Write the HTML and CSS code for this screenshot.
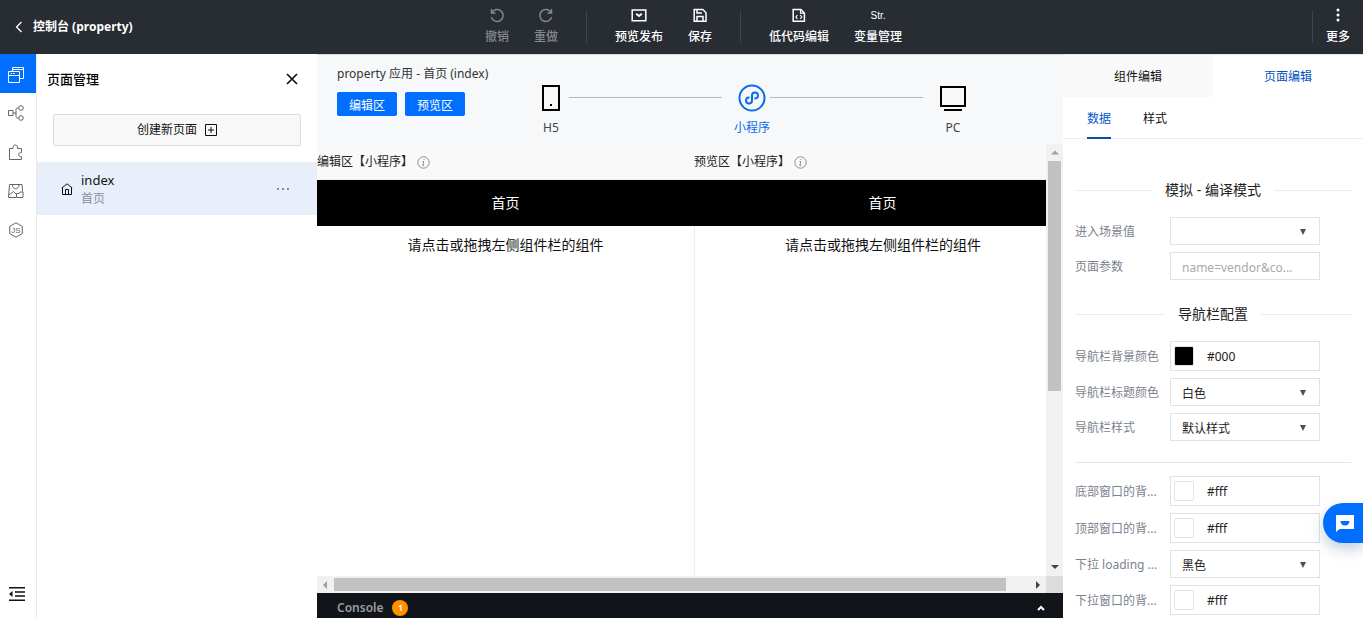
FILE: index.html
```html
<!DOCTYPE html>
<html lang="zh-CN">
<head>
<meta charset="utf-8">
<title>控制台 (property)</title>
<link rel="stylesheet" href="styles.css">
</head>
<body>
<div class="app">
  <header class="topbar">
    <a class="back" href="#">
      <svg width="8" height="12" viewBox="0 0 8 12" fill="none" stroke="currentColor" stroke-width="1.3"><path d="M6.5 1 1.5 6l5 5"/></svg>
      <span>控制台 (property)</span>
    </a>
    <nav class="tools">
      <button class="tool" disabled>
        <svg class="tool-icon" viewBox="0 0 16 16" fill="none" stroke="currentColor" stroke-width="1.5"><path d="M2.5 1v4h4M2.800 4.800a6 6 0 1 1-.4 4.400"/></svg>
        <span>撤销</span>
      </button>
      <button class="tool" disabled>
        <svg class="tool-icon" viewBox="0 0 16 16" fill="none" stroke="currentColor" stroke-width="1.5"><path d="M13.500 1v4h-4M13.200 4.800a6 6 0 1 0 .4 4.400"/></svg>
        <span>重做</span>
      </button>
      <span class="separator"></span>
      <button class="tool">
        <svg class="tool-icon" viewBox="0 0 16 16" fill="none" stroke="currentColor" stroke-width="1.500"><path d="M1.200 2h13.600v10.800H1.200z"/><path d="M5.200 5.800 8 8l2.800-2.200" stroke-width="2"/></svg>
        <span>预览发布</span>
      </button>
      <button class="tool">
        <svg class="tool-icon" viewBox="0 0 16 16" fill="none" stroke="currentColor" stroke-width="1.500"><path d="M2.200 1.500h8.600l3.200 3.200v8.600H2.200zM5 13V8.500h6V13M5 2v3h5"/></svg>
        <span>保存</span>
      </button>
      <span class="separator"></span>
      <button class="tool">
        <svg class="tool-icon" viewBox="0 0 16 16" fill="none" stroke="currentColor" stroke-width="1.500"><path d="M2.200 1.500h7.600l3.600 3.500v8.300H2.200z"/><path d="M6.500 7 4.900 9l1.600 2M9.200 7l1.600 2-1.600 2M9.500 2v3.200H13" stroke-width="1.200"/></svg>
        <span>低代码编辑</span>
      </button>
      <button class="tool">
        <span class="tool-glyph">Str.</span>
        <span>变量管理</span>
      </button>
    </nav>
    <span class="separator separator-end"></span>
    <button class="tool more">
      <svg class="tool-icon" viewBox="0 0 16 16" fill="currentColor"><circle cx="8" cy="2" r="1.500"/><circle cx="8" cy="7" r="1.500"/><circle cx="8" cy="12" r="1.500"/></svg>
      <span>更多</span>
    </button>
  </header>

  <div class="workspace">
    <nav class="rail">
      <button class="rail-item active" aria-label="页面管理">
        <svg width="16" height="16" viewBox="0 0 16 16" fill="none" stroke="currentColor"><path d="M.5 4.500h11v11H.5zM.5 8.500h11M2.500 6.500H4M5 6.500h1.500M4.500 4.500v-4h11v11h-4M4.500 2.500h11"/></svg>
      </button>
      <button class="rail-item" aria-label="流程">
        <svg width="16" height="16" viewBox="0 0 16 16" fill="none" stroke="currentColor"><path d="M.5 5.500h4.500v5H.5zM5 8h3M10.500 3H9.500Q8 3 8 4.500v7Q8 13 9.500 13h1"/><circle cx="13" cy="3" r="2.300"/><circle cx="13" cy="13" r="2.300"/></svg>
      </button>
      <button class="rail-item" aria-label="组件">
        <svg width="16" height="16" viewBox="0 0 16 16" fill="none" stroke="currentColor"><path d="M1.500 15.500V4.500H5C4.500-.2 10-.2 9.500 4.500h4v4.200c-4-.6-4 4.300 0 3.800v3z"/></svg>
      </button>
      <button class="rail-item" aria-label="素材">
        <svg width="16" height="16" viewBox="0 0 16 16" fill="none" stroke="currentColor"><path d="M8 14.500H.5l1-13h12.500l.6 7M4.500 2C5 7 10.500 7 11 2M1 12l4.500-3.500L8 11M8.500 14.500h6.500V9h-3l-1 1.500H8.500z"/></svg>
      </button>
      <button class="rail-item" aria-label="脚本">
        <svg width="16" height="16" viewBox="0 0 16 16" fill="none" stroke="currentColor"><path d="M8 .8 14.300 4.400v7.200L8 15.200 1.700 11.600V4.400z"/><text class="js-mark" x="8" y="11" text-anchor="middle">JS</text></svg>
      </button>
      <button class="rail-item collapse" aria-label="收起">
        <svg width="18" height="16" viewBox="0 0 18 16" fill="none" stroke="currentColor" stroke-width="1.500"><path d="M1 1.800h16M7 6h10M7 10h10M1 14.200h16"/><path d="M4.500 5v6L1 8z" fill="currentColor" stroke="none"/></svg>
      </button>
    </nav>

    <aside class="pages">
      <div class="pages-head">
        <h2 class="pages-title">页面管理</h2>
        <button class="close" aria-label="关闭">
          <svg width="12" height="12" viewBox="0 0 12 12" stroke="currentColor" stroke-width="1.700"><path d="m1 1 10 10M11 1 1 11"/></svg>
        </button>
      </div>
      <button class="create">
        <span>创建新页面</span>
        <svg width="12" height="12" viewBox="0 0 12 12" fill="none" stroke="currentColor"><path d="M.5.5h11v11H.5zM6 3v6M3 6h6"/></svg>
      </button>
      <div class="page-row">
        <svg width="12" height="12" viewBox="0 0 12 12" fill="none" stroke="currentColor"><path d="M.8 5 6 .8 11.200 5M1.500 4.500v7h9v-7M4.500 11.500V6.500h3v5"/></svg>
        <a class="page-link" href="#"><span class="page-name">index</span><span class="page-sub">首页</span></a>
        <button class="dots" aria-label="更多操作"><svg width="12" height="2" viewBox="0 0 12 2" fill="currentColor"><circle cx="1" cy="1" r=".8"/><circle cx="6" cy="1" r=".8"/><circle cx="11" cy="1" r=".8"/></svg></button>
      </div>
    </aside>

    <main class="stage">
      <div class="stage-head">
        <div class="stage-info">
          <div class="crumb">property 应用 - 首页 (index)</div>
          <div class="modes"><button class="mode">编辑区</button><button class="mode">预览区</button></div>
        </div>
        <div class="steps">
          <button class="step">
            <svg width="30" height="30" viewBox="0 0 30 30" fill="none" stroke="#000" stroke-width="2"><path d="M7 3h16v24H7z"/><path d="M14 22h2"/></svg>
            <span>H5</span>
          </button>
          <span class="step-line"></span>
          <button class="step current">
            <svg width="30" height="30" viewBox="0 0 30 30" fill="none" stroke="currentColor" stroke-width="2"><circle cx="15" cy="15" r="12.500"/><path d="M11.800 14.500a3 3 0 1 0 3.200 3v-5a3 3 0 1 1 3.200 3" stroke-linecap="round"/></svg>
            <span>小程序</span>
          </button>
          <span class="step-line"></span>
          <button class="step">
            <svg width="30" height="30" viewBox="0 0 30 30" fill="none" stroke="#000" stroke-width="2"><path d="M3 4h24v19H3zM6 27h18"/></svg>
            <span>PC</span>
          </button>
        </div>
      </div>

      <div class="canvas">
        <div class="panes">
          <section class="pane">
            <div class="pane-label"><span>编辑区【小程序】</span><svg width="13" height="13" viewBox="0 0 13 13" fill="none" stroke="currentColor"><circle cx="6.500" cy="6.500" r="5.700"/><path d="m7.200 3-.2 1M5.500 5.500h1.300L5.800 9.500h1.400"/></svg></div>
            <div class="phone-bar">首页</div>
            <div class="phone-body">请点击或拖拽左侧组件栏的组件</div>
          </section>
          <section class="pane">
            <div class="pane-label"><span>预览区【小程序】</span><svg width="13" height="13" viewBox="0 0 13 13" fill="none" stroke="currentColor"><circle cx="6.500" cy="6.500" r="5.700"/><path d="m7.200 3-.2 1M5.500 5.500h1.300L5.800 9.500h1.400"/></svg></div>
            <div class="phone-bar">首页</div>
            <div class="phone-body">请点击或拖拽左侧组件栏的组件</div>
          </section>
        </div>
        <div class="vscroll">
          <svg class="arrow" viewBox="0 0 16 16"><path class="faded" d="M4 10.500h8L8 6.500z"/></svg>
          <span class="vthumb"></span>
          <svg class="arrow" viewBox="0 0 16 16"><path d="M4 5h8l-4 4z"/></svg>
        </div>
        <div class="hscroll">
          <svg class="arrow" viewBox="0 0 16 16"><path class="faded" d="M10 4v8L6 8z"/></svg>
          <span class="hthumb"></span>
          <svg class="arrow" viewBox="0 0 16 16"><path d="M6 4v8l4-4z"/></svg>
        </div>
        <div class="corner"></div>
      </div>

      <div class="console">
        <span>Console</span><span class="count">1</span>
        <button class="expand" aria-label="展开"><svg width="8" height="6" viewBox="0 0 8 6" fill="none" stroke="currentColor" stroke-width="2"><path d="m1 5 3-3 3 3"/></svg></button>
      </div>
    </main>

    <aside class="props">
      <div class="tabs"><button class="tab">组件编辑</button><button class="tab selected">页面编辑</button></div>
      <div class="subtabs"><button class="subtab selected">数据</button><button class="subtab">样式</button></div>
      <form class="form">
        <h3 class="group first">模拟 - 编译模式</h3>
        <div class="fields">
          <div class="row"><label for="scene">进入场景值</label><div class="pick"><select id="scene"><option></option></select></div></div>
          <div class="row"><label for="params">页面参数</label><input class="text" id="params" type="text" placeholder="name=vendor&amp;co..."></div>
        </div>
        <h3 class="group">导航栏配置</h3>
        <div class="fields">
          <div class="row"><label for="navbg">导航栏背景颜色</label><div class="color"><span class="swatch black"></span><input id="navbg" type="text" value="#000"></div></div>
          <div class="row"><label for="navtitle">导航栏标题颜色</label><div class="pick"><select id="navtitle"><option>白色</option></select></div></div>
          <div class="row"><label for="navstyle">导航栏样式</label><div class="pick"><select id="navstyle"><option>默认样式</option></select></div></div>
        </div>
        <hr class="rule">
        <div class="fields">
          <div class="row"><label for="bottombg">底部窗口的背...</label><div class="color"><span class="swatch"></span><input id="bottombg" type="text" value="#fff"></div></div>
          <div class="row"><label for="topbg">顶部窗口的背...</label><div class="color"><span class="swatch"></span><input id="topbg" type="text" value="#fff"></div></div>
          <div class="row"><label for="loading">下拉 loading ...</label><div class="pick"><select id="loading"><option>黑色</option></select></div></div>
          <div class="row"><label for="pullbg">下拉窗口的背...</label><div class="color"><span class="swatch"></span><input id="pullbg" type="text" value="#fff"></div></div>
        </div>
      </form>
    </aside>
  </div>
  <button class="chat" aria-label="客服">
    <svg width="18" height="17" viewBox="0 0 18 17"><path fill="#fff" d="M0 0h18v14H3.500L0 17z"/><path fill="#006eff" d="M4.500 6h9a4.500 4.500 0 0 1-9 0z"/></svg>
  </button>
</div>
</body>
</html>
```
FILE: styles.css
```css
* { box-sizing: border-box; }
body { margin: 0; font: 12px/18px "Noto Sans", "Noto Sans CJK SC", sans-serif; color: #111; }
button { font: inherit; color: inherit; background: none; border: 0; padding: 0; margin: 0; }
a { color: inherit; text-decoration: none; }
svg { display: block; flex: none; }
h2, h3 { margin: 0; font-weight: 500; }

.app { height: 100vh; display: flex; flex-direction: column; overflow: hidden; position: relative; }

.topbar { flex: none; height: 54px; background: #282c33; color: #fff; display: flex; align-items: center; padding-right: 13px; }
.back { flex: 0 0 485px; display: flex; align-items: center; gap: 10px; padding-left: 15px; font-weight: 700; }
.tools { display: flex; align-items: center; gap: 25px; }
.tool { display: flex; flex-direction: column; align-items: center; gap: 4px; font-weight: 500; white-space: nowrap; }
.tool:disabled { color: #85888d; }
.tool-icon { width: 16px; height: 16px; }
.tool-glyph { height: 16px; font: 10px/16px "Liberation Sans", sans-serif; }
.separator { width: 1px; height: 32px; margin: 0 3px; background: #41454c; }
.separator-end { margin: 0 13px 0 auto; }

.workspace { flex: 1; min-height: 0; display: flex; }
.rail { flex: none; width: 37px; border-right: 1px solid #e5e8ed; display: flex; flex-direction: column; color: #62666d; }
.rail-item { height: 39px; display: flex; align-items: center; justify-content: center; padding: 0 4px 0 0; }
.rail-item.active { padding-top: 3px; background: #006eff; color: #fff; }
.collapse { margin-top: auto; margin-bottom: 5px; padding: 0 2px 0 0; color: #111; }
.js-mark { font: 8px "Liberation Sans", sans-serif; fill: currentColor; stroke: none; }

.pages { flex: none; width: 280px; }
.pages-head { height: 50px; padding: 0 19px 0 10px; display: flex; align-items: center; justify-content: space-between; }
.pages-title { font-size: 13px; color: #000; }
.create { width: 248px; height: 32px; margin: 10px 16px 16px; display: flex; align-items: center; justify-content: center; gap: 8px; background: #f8f8f8; border: 1px solid #ddd; border-radius: 2px; }
.page-row { height: 53px; padding: 0 28px 0 24px; display: flex; align-items: center; gap: 8px; background: #e9eefb; }
.page-link { flex: 1; display: flex; flex-direction: column; padding-top: 2px; }
.page-name { font-size: 13px; line-height: 19px; }
.page-sub { color: #888f9d; }

.stage { flex: 1; min-width: 0; display: flex; flex-direction: column; }
.stage-head { flex: none; height: 90px; display: flex; background: #f6f8fa; border-top: 1px solid #d5dae3; padding: 10px 92px 0 20px; }
.stage-info { flex: 0 0 196px; }
.crumb { color: #333; white-space: nowrap; }
.modes { display: flex; gap: 8px; margin-top: 9px; }
.mode { width: 60px; height: 24px; padding-top: 3px; border-radius: 2px; background: #006eff; color: #fff; }
.steps { flex: 1; display: flex; align-items: flex-start; padding-top: 18px; }
.step { width: 36px; display: flex; flex-direction: column; align-items: center; gap: 6px; color: #444; white-space: nowrap; }
.step.current { color: #0a6cec; }
.step-line { flex: 1; height: 1px; margin: 14px 12px 0 0; background: #b4b9be; }

.canvas { flex: 1; min-height: 0; display: grid; grid-template: minmax(0, 1fr) 17px / minmax(0, 1fr) 17px; }
.panes { display: flex; overflow: hidden; }
.pane { flex: 0 0 377px; display: flex; flex-direction: column; }
.pane-label { height: 36px; padding-top: 1px; display: flex; align-items: center; gap: 4px; background: #f9f9f9; border-bottom: 1px solid #eee; color: #222; }
.pane-label svg { color: #87909b; }
.phone-bar { height: 46px; line-height: 46px; background: #000; color: #fff; font-size: 14px; text-align: center; }
.phone-body { flex: 1; padding-top: 9px; font-size: 14px; line-height: 20px; text-align: center; }
.pane + .pane .phone-body { border-left: 1px solid #eee; }
.arrow { width: 16px; height: 16px; fill: #444; }
.faded { fill: #a0a0a0; }
.vscroll { background: #f1f1f1; display: flex; flex-direction: column; align-items: center; justify-content: space-between; }
.vthumb { width: 13px; height: 230px; margin-top: 1px; margin-bottom: auto; background: #c1c1c1; }
.hscroll { background: #f1f1f1; display: flex; align-items: center; }
.hthumb { flex: 1; height: 13px; margin-left: 1px; margin-right: 24px; background: #c1c1c1; }
.corner { background: #dcdcdc; }

.console { flex: none; height: 25px; padding: 5px 18px 0 20px; display: flex; align-items: center; gap: 9px; background: #111519; color: #9a9da0; font-weight: 600; }
.count { width: 16px; height: 16px; border-radius: 8px; background: #ff9000; color: #fff; font-size: 9px; line-height: 16px; text-align: center; }
.expand { margin-left: auto; color: #fff; }

.props { flex: none; width: 300px; overflow: hidden; background: #fff; }
.tabs { display: flex; border-top: 1px solid #e5e8ed; }
.tab { flex: 1; height: 42px; padding-top: 2px; background: #f9f9f9; }
.tab.selected { background: #fff; color: #0052c0; }
.subtabs { display: flex; gap: 32px; height: 42px; padding-left: 24px; border-bottom: 1px solid #eceef0; }
.subtab { height: 42px; padding-top: 3px; border-bottom: 2px solid transparent; }
.subtab.selected { color: #0058cf; border-color: #0b4fa5; }
.form { padding: 0 12px; }
.group { display: flex; align-items: center; gap: 13px; margin: 24px 0 17px; font-size: 14px; line-height: 20px; font-weight: 400; color: #222; }
.group.first { margin-top: 41px; }
.group::before, .group::after { content: ""; flex: 1; height: 1px; background: #ebebeb; }
.fields { display: grid; gap: 7px; }
.row { display: grid; grid-template-columns: 95px 150px; align-items: center; color: #7b828e; }
.row label { padding-top: 2px; white-space: nowrap; }
.text, .pick, .color { height: 28px; border: 1px solid #e0e3e6; background: #fff; min-width: 0; color: #222; }
.text { padding: 2px 11px 0; font: inherit; }
.text::placeholder { color: #aaa; }
.pick { position: relative; }
.pick select { width: 100%; height: 26px; padding: 3px 11px 0; border: 0; background: none; appearance: none; font: inherit; color: inherit; }
.pick::after { content: ""; position: absolute; right: 13px; top: 11px; width: 6px; height: 6px; background: #45525c; clip-path: polygon(0 0, 100% 0, 50% 100%); pointer-events: none; }
.color { height: 30px; display: flex; align-items: center; padding-left: 3px; gap: 13px; }
.color input { flex: 1; min-width: 0; border: 0; padding: 2px 0 0; background: none; font: inherit; color: inherit; }
.swatch { width: 20px; height: 20px; border: 1px solid #e4e4e4; border-radius: 2px; }
.swatch.black { background: #000; }
.rule { height: 1px; margin: 21px 0 13px; border: 0; background: #e3e5e7; }

.chat { position: absolute; right: 0; bottom: 75px; width: 40px; height: 40px; padding-left: 13px; border-radius: 20px 0 0 20px; background: #006eff; box-shadow: 0 6px 14px rgba(20, 60, 130, .25); }
```
